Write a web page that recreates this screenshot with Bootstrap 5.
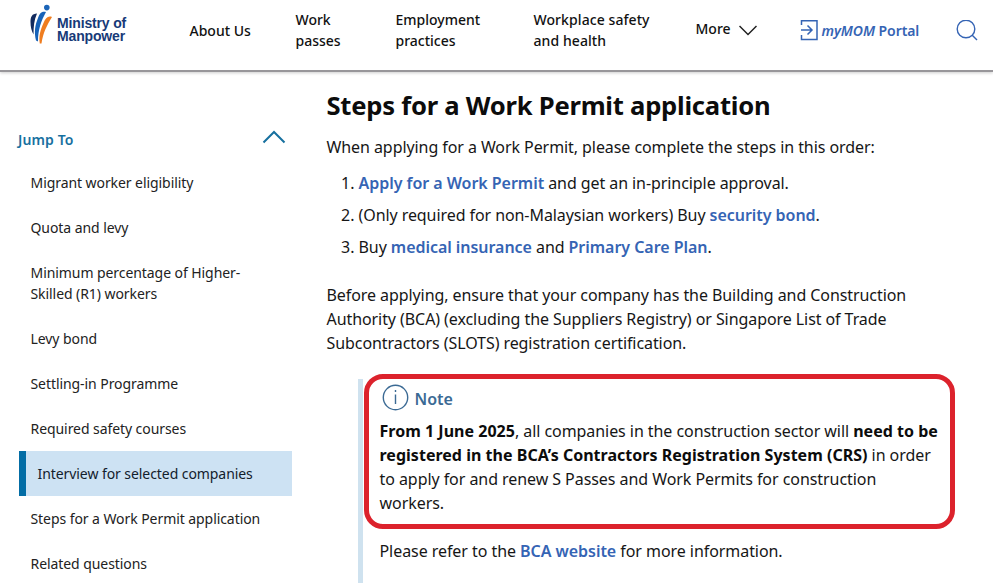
<!DOCTYPE html>
<html lang="en">
<head>
<meta charset="utf-8">
<meta name="viewport" content="width=device-width, initial-scale=1">
<title>Steps for a Work Permit application</title>
<link href="https://cdn.jsdelivr.net/npm/bootstrap@5.3.0/dist/css/bootstrap.min.css" rel="stylesheet">
<style>
body{font-family:"Noto Sans","Open Sans",sans-serif;font-size:16px;line-height:24px;color:#161616;background:#fff;overflow:hidden;height:587px}
a{text-decoration:none;color:#3564b4;font-weight:600}
.site-header{height:72px;border-bottom:2px solid #98969a;box-shadow:0 1px 3px #0003;font-size:14px;line-height:21px;font-weight:500}
.site-header a{font-weight:500;color:#111}
.site-header a.portal{color:#3564b4;font-weight:600;letter-spacing:-.08px}
.brand{width:160px;padding:4px 0 0 29px}
.brand-name{font:bold 14px/13px "Liberation Sans",Arial,sans-serif;color:#173a78;letter-spacing:-.15px;padding:13px 0 0 5px;white-space:nowrap}
.top-nav{padding-left:29.5px}
.menu-item{padding-top:20px;white-space:nowrap}
.menu-item.two-line{padding-top:9px}
.menu-item.w-more{padding-top:18px}
.w-about{width:106px}.w-passes{width:100px}.w-emp{width:138px}.w-safety{width:162px;letter-spacing:.08px}.w-more{width:104px}.w-portal{width:156.5px}
.sidebar{width:326.5px;padding:57px 34.5px 0 18px;font-size:14px;line-height:21px}
.jump{color:#17709f;font-weight:600;height:31px;letter-spacing:.12px}
.side-nav .nav-link{padding:12px 40px 12px 12.5px;color:#222;margin-left:0;letter-spacing:-.07px}
.side-nav .nav-link.active{background:#cde2f3;border-left:7px solid #036da5;margin-left:1px;padding-right:0;padding-left:11.5px;color:#12202c}
.content{width:640px;letter-spacing:-.075px}
.content a{letter-spacing:-.04px}
h1{font-size:25.6px;line-height:36px;font-weight:700;margin:16px 0 11px;color:#0c0c0c;letter-spacing:-.24px}
.steps{padding-left:32px;margin:12px 0 24px}
.steps li{margin-bottom:8px}
.callout{border-left:5px solid #cfe2ef;margin-left:31.5px;margin-top:24px;height:204px;padding-left:16.5px;letter-spacing:-.06px}
.callout b{color:#0c0c0c;letter-spacing:.02px}
.note-title{color:#3b6a94;font-weight:600;height:40px}
.highlight-ring{left:1px;top:-5px;width:591px;height:155px;border:5px solid #dc222c;border-radius:19px}
</style>
</head>
<body>
<header class="site-header d-flex">
  <div class="brand d-flex">
    <svg width="23" height="41" viewBox="29 4 23 41"><circle cx="46.800" cy="7.600" r="2.800" fill="#1c65b8"/><path d="M37 13.500C32 13.500 30.500 17 30.500 22C30.500 27 31.500 31 33.500 34.500C33.500 27 34 20 37 13.500Z" fill="#132b5e"/><path d="M46 12C41 11 39.500 14 38 18C35 25 34 32 36 40.500L38 41.500C38 30 41 21 46 12Z" fill="#1762b8"/><path d="M52 17C48 15.500 45.500 18 43.500 23C40.500 30 38.500 36 39.800 43.500L41.500 43.500C43 33 47 25 52 17Z" fill="#ef7d20"/></svg>
    <div class="brand-name">Ministry of<br>Manpower</div>
  </div>
  <nav class="top-nav d-flex">
    <a class="menu-item w-about" href="#">About Us</a>
    <a class="menu-item two-line w-passes" href="#">Work<br>passes</a>
    <a class="menu-item two-line w-emp" href="#">Employment<br>practices</a>
    <a class="menu-item two-line w-safety" href="#">Workplace safety<br>and health</a>
    <a class="menu-item w-more d-flex" href="#">More<svg class="ms-2" width="18" height="24" fill="none" stroke="#222" stroke-width="1.500"><path d="M.5 8 9 16.500 17.500 8"/></svg></a>
    <a class="menu-item portal w-portal d-flex" href="#"><svg class="me-1" width="18" height="22" fill="none" stroke="#3564b4" stroke-width="1.500"><path d="M1.500 5V.8H17V19.500H1.500V15M1 10H11.500M7.500 5.500 12 10 7.500 14.500"/></svg><span><i>myMOM</i> Portal</span></a>
    <a class="menu-item" href="#" aria-label="Search"><svg class="d-block" width="22" height="22" fill="none" stroke="#3564b4" stroke-width="1.400"><circle cx="10" cy="9" r="8.800"/><path d="M16 15 21 20"/></svg></a>
  </nav>
</header>
<main class="d-flex">
  <aside class="sidebar flex-shrink-0">
    <div class="jump d-flex justify-content-between"><span>Jump To</span><svg class="me-1" width="28" height="20" fill="none" stroke="#17709f" stroke-width="2"><path d="M3.500 13.500 14 3 24.500 13.500"/></svg></div>
    <nav class="side-nav nav flex-column">
      <a class="nav-link fw-normal" href="#">Migrant worker eligibility</a>
      <a class="nav-link fw-normal" href="#">Quota and levy</a>
      <a class="nav-link fw-normal" href="#">Minimum percentage of Higher-Skilled (R1) workers</a>
      <a class="nav-link fw-normal" href="#">Levy bond</a>
      <a class="nav-link fw-normal" href="#">Settling-in Programme</a>
      <a class="nav-link fw-normal" href="#">Required safety courses</a>
      <a class="nav-link fw-normal active" href="#">Interview for selected companies</a>
      <a class="nav-link fw-normal pe-0" href="#">Steps for a Work Permit application</a>
      <a class="nav-link fw-normal" href="#">Related questions</a>
    </nav>
  </aside>
  <article class="content">
    <h1>Steps for a Work Permit application</h1>
    <p class="mb-0">When applying for a Work Permit, please complete the steps in this order:</p>
    <ol class="steps">
      <li><a href="#">Apply for a Work Permit</a> and get an in-principle approval.</li>
      <li>(Only required for non-Malaysian workers) Buy <a href="#">security bond</a>.</li>
      <li>Buy <a href="#">medical insurance</a> and <a href="#">Primary Care Plan</a>.</li>
    </ol>
    <p class="mb-0">Before applying, ensure that your company has the Building and Construction<br>Authority (BCA) (excluding the Suppliers Registry) or Singapore List of Trade<br>Subcontractors (SLOTS) registration certification.</p>
    <section class="callout position-relative">
      <div class="highlight-ring position-absolute"></div>
      <div class="note-title d-flex"><svg class="mt-1 ms-1" width="27" height="28" fill="none" stroke="#3b6a94" stroke-width="1.400" overflow="visible"><circle cx="11.500" cy="14.500" r="12.200"/><path d="M11.500 11.500V21M11.500 7V9"/></svg><span class="ms-1 pt-2">Note</span></div>
      <p class="text-nowrap mb-4"><b>From 1 June 2025</b>, all companies in the construction sector will <b>need to be<br>registered in the BCA’s Contractors Registration System (CRS)</b> in order<br>to apply for and renew S Passes and Work Permits for construction<br>workers.</p>
      <p class="mb-0">Please refer to the <a href="#">BCA website</a> for more information.</p>
    </section>
  </article>
</main>
</body>
</html>
